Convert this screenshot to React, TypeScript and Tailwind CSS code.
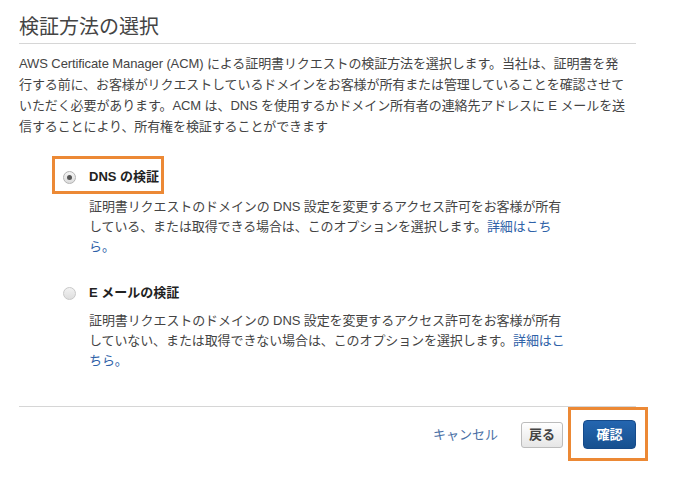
import React from "react";

const font = {
  fontFamily: '"Liberation Sans", "Noto Sans CJK JP", sans-serif',
};

function Radio({ checked }: { checked: boolean }) {
  return checked ? (
    <span className="flex items-center justify-center w-[13px] h-[13px] rounded-full border border-[#b3b3b3] bg-gradient-to-b from-[#f4f4f4] to-[#dcdcdc] shrink-0">
      <span className="w-[5px] h-[5px] rounded-full bg-[#555]" />
    </span>
  ) : (
    <span className="block w-[13px] h-[13px] rounded-full border border-[#c8c8c8] bg-gradient-to-b from-[#f2f2f2] to-[#dedede] shrink-0" />
  );
}

export default function App() {
  return (
    <div className="w-[680px] h-[485px] bg-white overflow-hidden" style={font}>
      <div className="ml-[19px] w-[617px]">
        <div className="pt-[13px] pb-[2px] border-b border-[#d6d6d6]">
          <h1 className="text-[20px] leading-[28px] text-[#444] font-normal">検証方法の選択</h1>
        </div>
        <div className="mt-[9px] text-[13px] leading-[21px] text-[#444] tracking-[-0.1px]">
          <div className="whitespace-nowrap">AWS Certificate Manager (ACM) による証明書リクエストの検証方法を選択します。当社は、証明書を発</div>
          <div className="whitespace-nowrap">行する前に、お客様がリクエストしているドメインをお客様が所有または管理していることを確認させて</div>
          <div className="whitespace-nowrap">いただく必要があります。ACM は、DNS を使用するかドメイン所有者の連絡先アドレスに E メールを送</div>
          <div className="whitespace-nowrap">信することにより、所有権を検証することができます</div>
        </div>

        <div className="ml-[44px]">
          <div className="relative mt-[30px] flex items-center gap-[13px] h-[20px]">
            <Radio checked />
            <span className="text-[13px] font-bold text-[#222]">DNS の検証</span>
            <span className="absolute left-[-11px] top-[-11px] w-[112px] h-[38px] border-[3px] border-[#ec8935]" />
          </div>
          <div className="mt-[10px] ml-[26px] text-[13px] leading-[20px] text-[#444] tracking-[-0.1px]">
            <div className="whitespace-nowrap">証明書リクエストのドメインの DNS 設定を変更するアクセス許可をお客様が所有</div>
            <div className="whitespace-nowrap">
              している、または取得できる場合は、このオプションを選択します。<span className="text-[#2f62a8]">詳細はこち</span>
            </div>
            <div className="whitespace-nowrap text-[#2f62a8]">ら。</div>
          </div>

          <div className="mt-[26px] flex items-center gap-[13px] h-[20px]">
            <Radio checked={false} />
            <span className="text-[13px] font-bold text-[#222]">E メールの検証</span>
          </div>
          <div className="mt-[8px] ml-[26px] text-[13px] leading-[20px] text-[#444] tracking-[-0.1px]">
            <div className="whitespace-nowrap">証明書リクエストのドメインの DNS 設定を変更するアクセス許可をお客様が所有</div>
            <div className="whitespace-nowrap">
              していない、または取得できない場合は、このオプションを選択します。<span className="text-[#2f62a8]">詳細はこ</span>
            </div>
            <div className="whitespace-nowrap text-[#2f62a8]">ちら。</div>
          </div>
        </div>

        <div className="mt-[35px] border-t border-[#d6d6d6] pt-[13px] flex items-center justify-end h-[43px]">
          <span className="text-[13px] text-[#4a6fa5] mr-[23px]">キャンセル</span>
          <button className="w-[42px] h-[26px] rounded-[3px] border border-[#bcbcbc] bg-gradient-to-b from-[#ffffff] to-[#e6e6e6] text-[13px] font-bold text-[#444] flex items-center justify-center mr-[20px]">
            戻る
          </button>
          <div className="relative">
            <button className="w-[53px] h-[29px] rounded-[4px] border border-[#154a8a] bg-gradient-to-b from-[#2466b0] to-[#17508f] text-[13px] font-bold text-white flex items-center justify-center">
              確認
            </button>
            <span className="absolute left-[-15px] top-[-13px] w-[80px] h-[54px] border-[3px] border-[#ec8935]" />
          </div>
        </div>
      </div>
    </div>
  );
}
